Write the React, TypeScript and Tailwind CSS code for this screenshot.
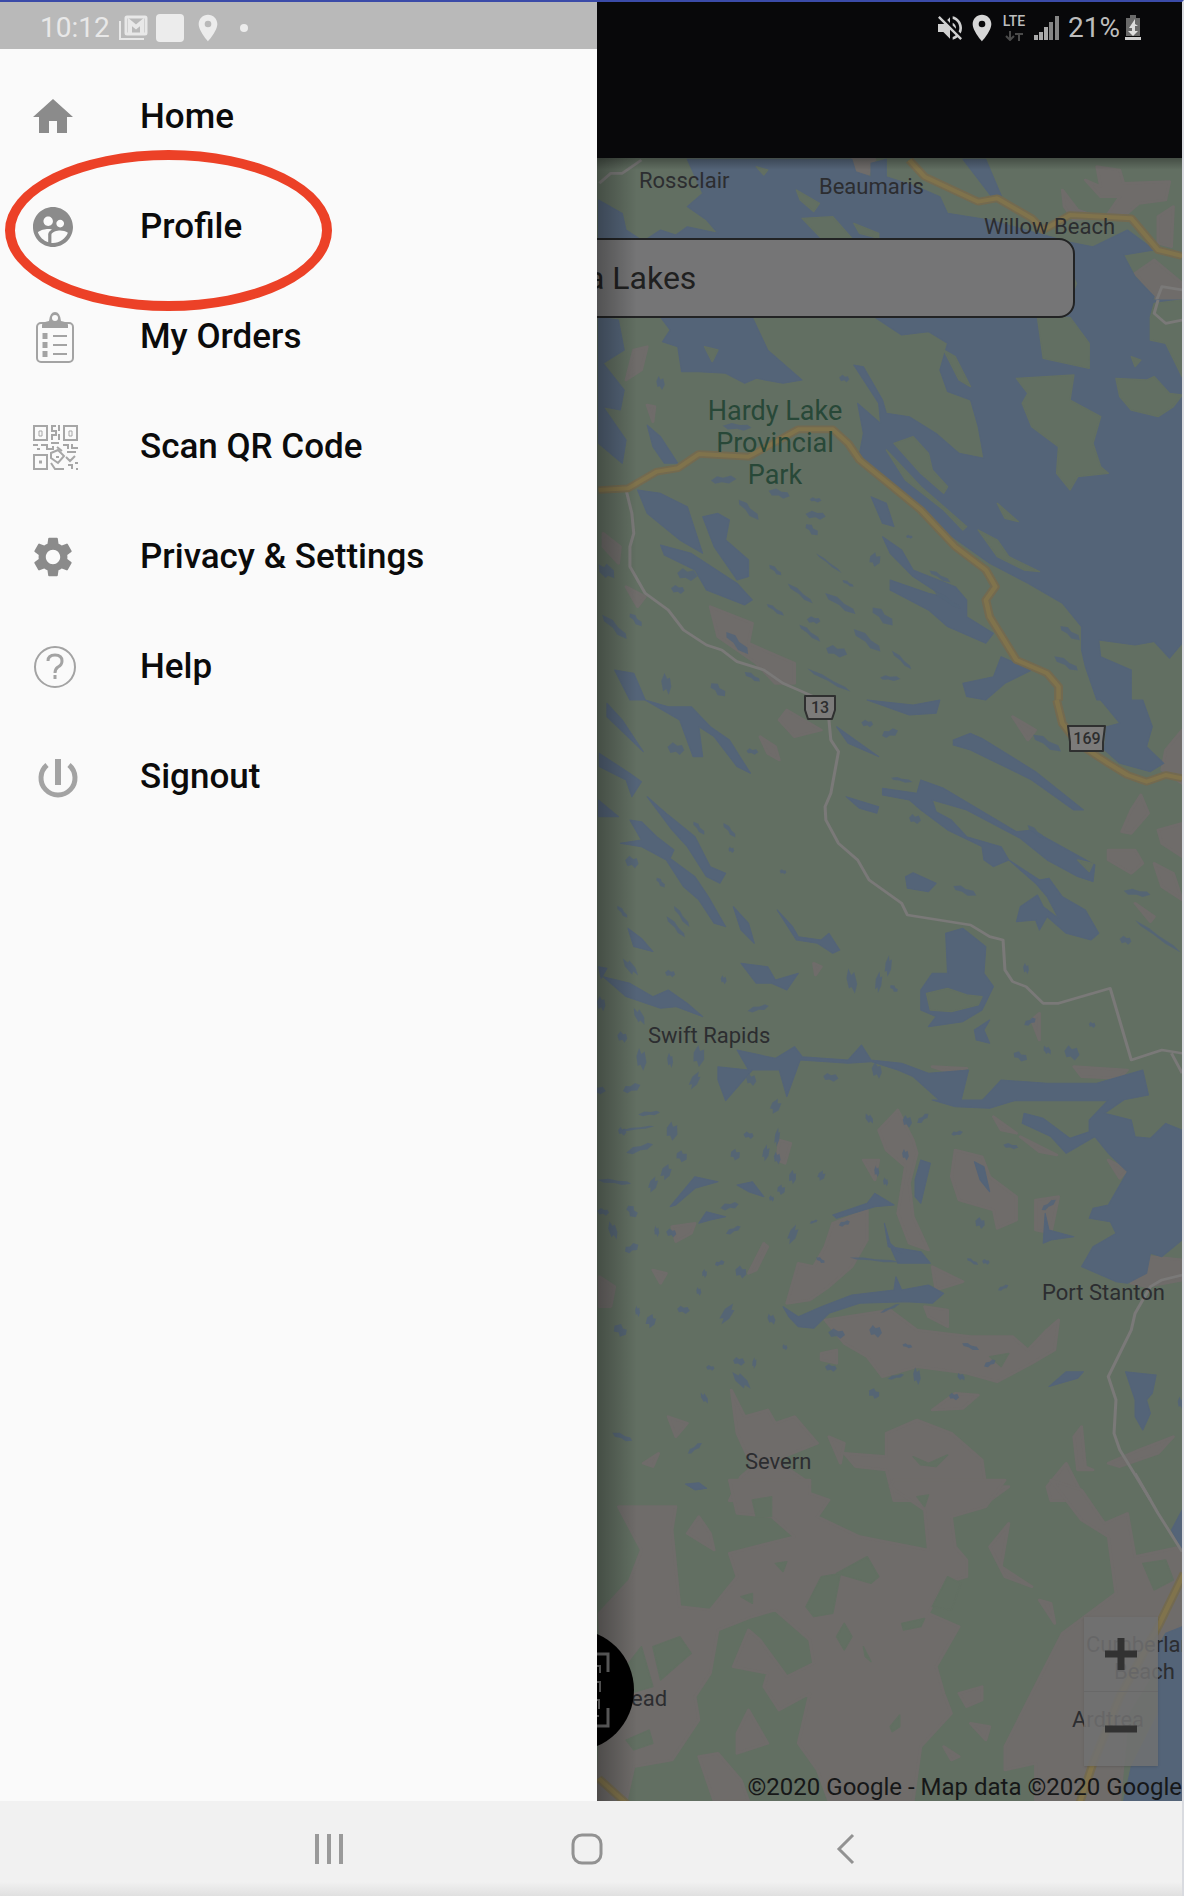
import type { ReactNode } from "react";
import { MdHome, MdSupervisedUserCircle, MdSettings, MdLocationOn, MdVolumeOff } from "react-icons/md";

const WATER = "#546478";
const WOODS = "#626f62";
const LAND = "#6f6c6a";

type Tile = {
  y: number;
  land: string[];
  water: string[];
  woods: string[];
  ponds: number[][];
  highway: string[];
  road: string[];
};

const tiles: Tile[] = [
  {
    y: 0,
    land: [
      "M1310 540L1350 560L1340 500L1400 510L1410 550L1530 545L1520 600L1450 610L1410 650L1370 640L1400 590L1350 590Z",
      "M1250 570L1290 630L1340 650L1280 660L1255 620Z",
      "M1500 650L1540 620L1535 740L1500 730Z",
      "M700 478L760 478L740 530L700 520Z",
      "M1440 820L1490 780L1563 850L1563 960L1500 900Z",
    ],
    water: [
      "M38 600L100 640L110 690L150 720L38 720Z",
      "M270 478L700 478L710 515L750 530L750 490L790 478L790 530L870 560L930 590L950 640L1060 660L1250 720L160 720L200 690L240 705L270 680L350 700L320 660L270 620L310 580Z",
      "M990 478L1050 478L1095 600L1075 605Z",
      "M1240 720L1330 740L1420 690L1490 750L1410 765L1440 830L1490 890L1440 1020L1310 1020L1260 950L1290 850Z",
    ],
    woods: [
      "M555 570L615 610L600 635L565 600Z",
      "M570 655L650 650L700 715L620 715Z",
      "M705 670L770 700L770 715L720 700Z",
      "M450 500L480 510L470 525Z",
    ],
    ponds: [],
    highway: ["M850 480L890 530L1030 605L1080 595L1170 655L1200 690L1270 645L1430 655L1500 750L1563 768"],
    road: ["M40 550L70 520L100 520L150 480", "M1563 870L1510 860L1490 920L1530 970L1563 960"],
  },
  {
    y: 300,
    land: [
      "M110 240L130 150L165 140L150 210Z",
      "M330 920L440 970L430 1030L550 1090L550 1150L500 1150L450 1090L350 1010Z",
      "M50 700L95 740L90 790L50 740Z",
      "M110 860L160 890L140 920Z",
      "M165 315L185 320L180 365Z",
    ],
    water: [
      "M38 52L90 60L105 150L50 190L105 270L95 330L50 320L110 420L100 490L38 430Z",
      "M200 52L440 52L480 150L570 240L520 250L450 235L420 250L370 220L300 215L255 215L245 140L205 125L225 90Z",
      "M760 52L830 105L900 95L950 130L930 210L950 275L1010 300L1030 380L1045 475L980 460L920 400L850 350L790 340L780 300L730 200L705 195L770 310L775 370L715 310L730 400L720 460L770 530L950 700L1060 790L1160 850L1250 910L1300 980L1300 1050L1310 1100L1340 1200L1430 1200L1430 1110L1350 1070L1345 1020L1440 1035L1490 1025L1530 1075L1563 1030L1563 0L1280 0L1250 50Z",
      "M140 570L200 580L270 620L310 760L250 720L165 640Z",
      "M310 650L350 640L380 660L370 720L430 780L430 830L400 840L340 740Z",
      "M200 735L280 760L400 850L440 900L420 915L320 870L290 810L210 765Z",
      "M165 375L200 410L245 490L210 490L180 440Z",
      "M780 710L830 750L860 810L970 860L1000 900L1000 950L1070 1000L1050 1030L950 980L900 930L800 870L800 840L900 880L940 890L860 830L800 760Z",
      "M750 590L790 610L810 680L780 670Z",
      "M990 1150L1070 1130L1090 1070L1170 1110L1100 1150L1050 1200L1000 1190Z",
      "M80 1110L130 1120L160 1200L120 1200Z",
    ],
    woods: [
      "M1185 52L1270 52L1320 130L1320 205L1200 175Z",
      "M1130 235L1280 225L1270 300L1350 350L1330 430L1350 500L1370 520L1290 530L1270 570L1235 520L1240 440L1170 380L1145 310L1160 280Z",
      "M1390 235L1470 240L1490 230L1530 280L1563 285L1540 320L1500 350L1430 330L1400 290Z",
      "M1480 52L1490 10L1563 0L1563 230L1520 130L1480 120Z",
      "M810 430L860 410L900 460L910 510L950 560L940 580L880 520Z",
      "M790 450L880 560L1000 680L990 690L940 630L840 540Z",
      "M1030 690L1080 720L1110 770L1190 815L1150 810L1080 770Z",
      "M1080 610L1135 665L1100 655Z",
      "M940 150L970 170L1010 260L980 240Z",
      "M315 140L350 150L335 185Z",
      "M1430 170L1455 180L1440 200Z",
    ],
    ponds: [
      [365, 540, 30, 14, -10], [510, 580, 26, 14, 10], [430, 630, 36, 12, 45], [605, 645, 24, 14, 0], [595, 690, 20, 12, 40],
      [680, 235, 12, 12, 0], [200, 250, 10, 22, 0], [400, 380, 34, 12, 0], [270, 825, 24, 20, 0], [245, 868, 16, 14, 0],
      [60, 815, 16, 30, -30], [80, 980, 44, 12, 45], [135, 960, 22, 10, 45], [565, 880, 40, 8, 40], [500, 930, 26, 7, 35],
      [670, 910, 46, 12, 35], [780, 950, 34, 16, 40], [600, 960, 16, 12, 0], [590, 1000, 34, 8, 40], [740, 1020, 44, 14, 40],
      [660, 1055, 26, 18, 10], [830, 1080, 34, 7, 45], [800, 1135, 24, 9, 0], [640, 1140, 60, 7, 30], [400, 1030, 40, 14, 45],
      [215, 1150, 12, 34, 0], [350, 1170, 24, 14, 40], [440, 1130, 22, 9, 30], [760, 780, 14, 22, 20], [690, 850, 16, 6, 30],
      [640, 790, 40, 4, 40], [500, 810, 20, 8, 40], [930, 830, 30, 8, 30], [950, 900, 40, 8, 35], [1270, 1000, 30, 12, 35],
      [1260, 1090, 34, 12, 30], [605, 600, 14, 8, 0], [850, 710, 8, 6, 0],
    ],
    highway: [
      "M38 570L115 565L190 515L245 505L300 462L430 470L510 420L560 388L650 388L690 430L720 480L880 630L970 740L1050 810L1075 860L1050 900L1060 950L1130 1080L1210 1120L1240 1160L1240 1202",
    ],
    road: ["M110 570L125 640L130 700L120 740L120 800L160 880L220 930L260 990L320 1035L360 1050L400 1085L470 1110L520 1150L600 1190", "M1563 60L1520 70L1490 40L1500 0"],
  },
  {
    y: 700,
    land: [
      "M510 60L530 30L620 90L550 110Z", "M460 110L500 140L510 180L480 160Z", "M1430 330L1455 285L1475 340L1430 400L1405 395Z",
      "M1370 450L1440 450L1460 490L1430 520L1370 480Z", "M1500 390L1563 370L1563 470L1510 430Z", "M1490 490L1540 520L1563 600L1510 560Z",
      "M1520 150L1563 90L1563 250L1510 210Z", "M1120 50L1180 90L1160 120Z", "M1170 960L1190 940L1190 1020Z",
      "M600 790L620 800L605 825Z", "M1280 1100L1420 1110L1400 1135L1300 1130Z", "M910 1100L1000 1105L950 1115Z", "M1440 610L1490 650L1480 665Z",
    ],
    water: [
      "M1010 100L1040 115L1180 215L1305 330L1280 330L1170 240L1010 150L965 135L965 120Z",
      "M780 265L870 280L880 240L940 265L1130 395L1170 390L1335 495L1330 545L1290 530L1210 480L1140 415L1000 330L910 300L920 335L960 360L1000 410L1090 440L1110 480L1070 500L1045 480L1040 440L950 390L880 330L850 300L780 285Z",
      "M1110 480L1190 540L1215 535L1250 590L1310 630L1345 700L1325 720L1260 700L1210 650L1190 690L1180 660L1130 665L1140 620L1185 585L1200 620L1240 655L1210 590L1180 550Z",
      "M840 530L860 518L920 550L900 575L845 565Z",
      "M945 700L990 685L1050 740L1045 820L1070 860L1040 930L990 965L900 980L920 950L880 930L880 870L910 820L950 820Z",
      "M1350 0L1460 0L1485 80L1470 140L1515 190L1480 215L1400 190L1360 150L1365 80L1400 70Z",
      "M165 290L220 345L290 410L330 500L370 520L355 550L320 530L270 440L230 390Z",
      "M95 430L150 420L120 360L150 365L190 410L235 450L225 475L290 530L325 590L370 680L340 670L300 600L260 560L215 480L150 440Z",
      "M60 10L100 60L155 155L60 50Z",
      "M160 0L220 20L280 20L330 80L380 120L435 220L400 200L340 110L300 80L310 170L285 170L250 60Z",
      "M40 160L120 220L150 245L125 290L110 240L40 200Z",
      "M38 300L90 350L38 350Z",
      "M505 630L545 680L560 710L620 720L640 700L668 750L650 760L610 730L555 720Z",
      "M410 790L480 800L500 840L560 820L530 870L490 850L450 850Z",
      "M50 830L120 850L180 890L220 870L270 910L310 950L240 920L200 925L110 890Z",
      "M390 620L430 670L445 730L410 690Z",
      "M115 685L150 715L180 755L130 740Z",
      "M660 80L770 170L690 130Z",
      "M685 290L770 320L765 340L720 325Z",
      "M740 0L860 15L930 0L920 40L850 45Z",
      "M350 1100L430 1110L400 1050L500 1075L550 1040L570 1070L690 1080L725 1035L750 1080L830 1090L900 1120L1005 1110L985 1202L930 1202L860 1130L820 1110L750 1085L690 1090L565 1080L530 1190L510 1110L440 1110L370 1202L350 1140Z",
      "M1090 1140L1210 1150L1340 1150L1460 1110L1475 1185L1400 1202L1040 1202Z",
      "M38 800L60 805L45 835Z",
      "M1020 990L1060 960L1045 990L1060 1030L1025 1020Z",
    ],
    woods: [
      "M895 880L950 865L1000 885L1040 890L1030 915L960 935L905 930Z",
      "M1290 480L1330 490L1320 515Z",
    ],
    ponds: [
      [995, 573, 30, 12, 20], [240, 145, 20, 20, 0], [865, 358, 14, 16, 0], [380, 390, 24, 8, 50], [300, 385, 22, 8, 50], [125, 485, 16, 20, 0],
      [200, 548, 16, 8, 50], [240, 680, 36, 8, 50], [255, 650, 34, 7, 55], [100, 635, 20, 7, 50], [700, 845, 12, 40, -5], [770, 845, 8, 34, 10],
      [795, 800, 8, 34, 10], [225, 820, 12, 12, 0], [365, 840, 7, 14, 0], [455, 925, 26, 10, -20], [145, 950, 10, 30, -20], [100, 1010, 12, 18, 0],
      [150, 1080, 12, 36, 0], [225, 1080, 7, 24, 0], [300, 1070, 14, 34, 10], [290, 1140, 10, 30, 30], [125, 1165, 22, 14, -30], [45, 910, 10, 24, 0],
      [1275, 1060, 18, 24, 0], [1165, 965, 16, 10, -40], [1140, 1070, 18, 14, 20], [1210, 1050, 8, 16, -20], [645, 1133, 18, 14, 0],
      [1445, 578, 32, 12, 5], [1500, 710, 70, 6, 38], [1415, 720, 14, 14, 0], [1210, 130, 40, 14, 30], [1155, 805, 7, 18, 0], [800, 100, 20, 14, -30],
      [740, 70, 14, 12, 0], [830, 240, 26, 7, 10], [1180, 395, 26, 8, 40], [440, 155, 14, 10, 0], [520, 515, 8, 8, 0], [385, 450, 7, 10, 0],
      [810, 865, 12, 8, 40], [1328, 975, 8, 10, 0], [765, 1110, 12, 26, 0], [437, 1140, 12, 20, 0], [120, 800, 10, 34, -30], [35, 1170, 20, 14, 0],
    ],
    highway: ["M1235 0L1250 70L1290 130L1370 190L1420 225L1470 245L1520 225L1563 235"],
    road: [
      "M640 60L645 120L665 155L645 280L630 320L632 360L665 430L715 480L745 540L830 610L845 645L1010 675L1060 710L1095 720L1100 810L1120 845L1155 860L1200 910L1240 910L1375 865L1430 1080L1510 1050L1563 1060",
      "M1535 1060L1563 1120",
    ],
  },
  {
    y: 1100,
    land: [
      "M770 90L820 30L860 120L870 160L850 250L860 350L900 450L850 430L820 340L840 200L790 150Z",
      "M970 150L1040 170L1060 230L1130 290L1130 360L1080 385L1070 330L980 300L960 230Z",
      "M650 370L740 330L740 420L700 500L640 560L590 600L530 610L560 490L600 500L630 440Z",
      "M630 660L800 630L870 690L1010 710L1120 710L1160 750L1210 690L1240 660L1230 750L1170 790L1080 845L1000 820L870 800L780 830L740 770L680 730Z",
      "M385 870L420 950L480 930L500 970L550 950L610 1030L500 1080L590 1150L580 1202L380 1202L410 1130L440 1100L400 1000Z",
      "M680 1060L790 1070L790 1000L870 960L960 1000L1040 1080L1050 1160L1110 1160L1060 1202L810 1202L790 1110L710 1100Z",
      "M1210 1160L1260 1090L1310 1202L1220 1202Z",
      "M220 950L270 970L240 1010Z", "M230 380L290 370L280 400L240 425Z", "M430 520L470 430L480 440L450 510Z",
      "M180 510L215 520L200 550Z", "M155 1090L195 1060L180 1100Z", "M1370 180L1420 210L1400 235Z", "M1070 50L1130 100L1090 90Z",
      "M1140 110L1235 165L1190 155Z", "M1180 300L1240 290L1220 400L1180 390Z", "M1280 1010L1300 980L1310 1100L1330 1110L1290 1110Z",
      "M1370 1090L1450 1050L1540 1010L1500 1060L1400 1100Z", "M910 930L970 880L1030 885L990 925Z", "M730 180L770 180L760 240Z",
      "M510 120L540 130L525 190L505 180Z", "M1480 470L1563 480L1563 540L1470 560L1430 550L1430 520Z", "M620 760L660 750L660 790L620 780Z",
      "M890 620L950 630L950 680L900 650Z", "M40 530L80 560L70 620L40 620Z", "M640 1010L680 1030L670 1090Z", "M910 500L990 545L920 570Z",
    ],
    water: [
      "M1370 0L1410 0L1360 40L1430 60L1440 110L1480 115L1520 70L1563 90L1563 420L1510 470L1480 460L1470 520L1420 550L1390 545L1300 500L1330 440L1390 400L1375 365L1320 355L1330 325L1370 315L1420 215L1370 160L1335 110L1260 160L1220 110L1145 70L1150 40L1200 55L1270 115L1320 95L1320 60Z",
      "M520 620L560 650L620 620L700 585L810 570L815 530L830 570L900 555L940 580L910 610L840 605L720 610L640 640L600 685L560 680L535 650Z",
      "M1415 815L1495 825L1485 880L1470 900L1480 940L1460 990L1440 950L1440 900Z",
      "M910 0L1130 0L1060 25L970 20Z",
      "M880 180L905 190L880 310L865 290L865 240Z", "M1020 185L1045 200L1060 275L1035 240Z", "M225 320L290 230L350 245L290 265L240 315Z",
      "M650 345L740 310L760 280L810 315L760 320L660 355Z", "M1215 860L1260 815L1305 815L1290 835Z", "M800 440L880 455L905 490L820 490Z",
      "M785 370L800 430L830 460L795 440Z", "M400 255L440 245L470 290L430 275Z", "M300 370L320 335L370 350L330 360Z",
      "M1200 430L1205 340L1215 390L1280 410L1220 420Z", "M270 1155L320 1165L290 1170Z",
    ],
    woods: ["M860 1070L900 1090L950 1065L920 1100L880 1095Z", "M1060 770L1110 760L1090 800Z"],
    ponds: [
      [500, 20, 12, 24, 30], [170, 40, 26, 8, -10], [100, 95, 10, 14, 0], [140, 85, 40, 5, -10], [230, 95, 14, 30, 10], [145, 145, 34, 12, -25],
      [255, 170, 14, 18, 20], [215, 215, 12, 26, 25], [180, 255, 10, 26, 25], [80, 245, 40, 8, 5], [395, 165, 12, 18, 20], [430, 105, 12, 12, 0],
      [475, 160, 8, 26, 15], [505, 110, 6, 30, 10], [505, 175, 8, 20, 0], [545, 230, 9, 22, 10], [515, 270, 10, 16, 20], [490, 295, 6, 10, 0],
      [620, 228, 9, 16, 30], [380, 318, 22, 12, -20], [125, 335, 18, 14, 50], [75, 390, 10, 30, -10], [125, 445, 18, 14, -40], [228, 398, 12, 14, 0],
      [190, 395, 6, 18, 0], [390, 390, 20, 9, -35], [545, 405, 10, 32, 25], [410, 515, 14, 20, 10], [355, 490, 12, 9, -30], [315, 520, 6, 14, 10],
      [300, 575, 6, 14, 0], [375, 640, 12, 36, 35], [260, 630, 15, 13, 0], [175, 662, 12, 22, 25], [140, 635, 6, 18, 0], [95, 690, 18, 18, 30],
      [490, 658, 9, 18, -10], [745, 55, 8, 18, -20], [845, 65, 11, 20, 0], [885, 55, 18, 9, -50], [840, 165, 8, 18, 0], [1115, 138, 18, 9, 5],
      [765, 215, 6, 18, 0], [788, 245, 6, 14, 0], [975, 100, 14, 8, -20], [1035, 368, 12, 18, 10], [1215, 315, 22, 9, -45], [618, 480, 12, 7, 30],
      [760, 480, 60, 5, 5], [660, 700, 20, 16, 0], [762, 695, 15, 20, 0], [645, 803, 14, 12, 0], [1010, 740, 22, 8, 20], [1060, 790, 16, 9, -40],
      [845, 738, 12, 7, 10], [815, 830, 20, 7, -20], [870, 830, 9, 28, 0], [758, 880, 14, 16, 20], [967, 890, 12, 12, 0], [1095, 563, 14, 7, -35],
      [1015, 485, 16, 6, 30], [1050, 485, 9, 9, 0], [405, 785, 14, 14, 0], [410, 840, 12, 36, -35], [315, 895, 7, 20, -20], [100, 1010, 26, 10, 20],
      [290, 1045, 22, 8, -45], [330, 803, 10, 9, 0], [525, 742, 6, 10, 0], [985, 830, 8, 14, -20], [800, 625, 26, 5, -30], [680, 370, 14, 9, -30],
      [1560, 910, 8, 20, 0], [50, 335, 14, 12, 0], [445, 790, 5, 18, 10], [600, 365, 10, 5, -30],
    ],
    highway: [],
    road: ["M1563 525L1510 540L1480 560L1440 640L1430 690L1370 830L1390 900L1385 1000L1400 1050L1480 1200"],
  },
  {
    y: 1480,
    land: [
      "M380 0L590 0L590 40L640 60L610 110L720 170L900 210L890 90L800 20L810 0L1100 0L1050 80L960 110L970 200L1000 240L1000 290L940 310L900 400L980 440L920 560L940 640L960 700L880 800L860 963L640 963L610 870L560 790L590 640L510 690L470 620L480 580L390 560L430 450L460 480L530 590L600 550L590 480L500 390L440 410L350 450L330 580L290 650L300 720L230 840L130 860L110 963L38 963L38 880L50 600L40 400L120 300L150 210L90 80L240 80L230 150L250 380L330 390L400 290L380 220L550 170L490 110L400 100Z",
      "M1220 0L1300 30L1360 130L1420 100L1440 230L1563 200L1563 430L1420 700L1400 963L1180 963L1180 850L1100 870L1100 800L1170 640L1250 460L1390 340L1370 170L1300 120Z",
      "M300 830L350 820L410 900L430 963L340 963Z",
      "M1060 200L1110 130L1090 260L1170 320L1100 290Z", "M270 160L300 110L330 160L340 210Z", "M1190 360L1220 370L1230 430Z",
      "M980 640L1040 620L1040 660L1000 680Z", "M1010 730L1060 740L1050 780Z", "M940 800L980 830L960 840Z", "M400 760L430 690L480 790L400 820Z",
    ],
    water: [
      "M1563 440L1520 460L1500 500L1500 700L1430 860L1410 963L1563 963Z",
      "M1563 90L1535 150L1563 215Z",
      "M265 12L300 8L320 25L290 28Z",
    ],
    woods: [
      "M660 280L740 230L770 290L750 310Z", "M580 380L620 290L670 280L650 400L600 410Z", "M440 60L490 50L490 110L450 110Z",
      "M830 430L890 415L880 440L835 450Z", "M660 470L680 430L700 470L680 510Z", "M800 740L825 705L825 740L805 755Z",
      "M910 380L950 290L985 310L960 390Z", "M1460 250L1520 240L1540 300L1490 330Z", "M180 500L250 470L280 520L200 600Z",
      "M110 780L170 750L180 790L130 810Z", "M90 590L150 500L180 620L120 640Z", "M500 250L530 245L520 275Z", "M410 350L440 340L440 370Z",
      "M870 50L900 45L890 80Z", "M730 500L750 545L735 530Z",
    ],
    ponds: [],
    highway: ["M1568 280L1500 440L1400 650L1330 850L1295 970", "M38 895L115 975"],
    road: ["M1440 -20L1500 100L1563 215"],
  },
];

function MapDrawing() {
  return (
    <svg viewBox="597 158 585 1643" preserveAspectRatio="xMinYMin slice" className="absolute inset-0 h-full w-full" aria-hidden="true">
      <rect x="597" y="158" width="585" height="1643" fill={WOODS} />
      {tiles.map((t) => (
        <g key={t.y} transform={`translate(584 ${t.y}) scale(0.3827 0.3333)`} strokeLinejoin="round">
          <path d={t.land.join("")} fill={LAND} stroke={LAND} strokeWidth="8" />
          <path d={t.water.join("")} fill={WATER} stroke={WATER} strokeWidth="3" />
          <path d={t.woods.join("")} fill={WOODS} stroke={WOODS} strokeWidth="4" />
          {t.ponds.map(([x, y, rx, ry, a], i) => (
            <path
              key={i}
              d="M-1.1 -.2L-.4 -.9L.2 -.4L.8 -.5L1.1 .3L.5 1L0 .5L-.7 .7Z"
              fill={WATER}
              opacity="0.85"
              transform={`translate(${x} ${y}) rotate(${i % 2 ? a : a + 180}) scale(${rx} ${ry})`}
            />
          ))}
          <path d={t.road.join("")} fill="none" stroke="#7a7978" strokeWidth="8" />
          <path d={t.highway.join("")} fill="none" stroke="#736a50" strokeWidth="23" />
          <path d={t.highway.join("")} fill="none" stroke="#80734c" strokeWidth="12" />
        </g>
      ))}
      <g fill="#7c7b7a" stroke="#2f3030" strokeWidth="2" strokeLinejoin="round">
        <path d="M805 696h30v14l-3 9h-24l-3-9z" />
        <path d="M1068 726h37l-2 16v9h-33v-9z" />
      </g>
      <g fill="#2c2d2e" fontFamily="Roboto, sans-serif" fontWeight="500" fontSize="16" textAnchor="middle">
        <text x="820" y="713">13</text>
        <text x="1087" y="744">169</text>
      </g>
    </svg>
  );
}

function Place({ className, children }: { className: string; children: ReactNode }) {
  return <span className={`absolute whitespace-nowrap text-[22px] leading-7 text-[#2c2d30] ${className}`}>{children}</span>;
}

function ClipboardIcon() {
  return (
    <svg viewBox="0 0 50 52" className="h-[52px] w-[50px]" fill="none" stroke="#a3a3a3" aria-hidden="true">
      <rect x="8" y="12" width="36" height="39" rx="4" strokeWidth="2" />
      <path d="M13 17v-3q0-3 7-4q1-9 6-9t6 9q7 1 7 4v3z" fill="#a0a0a0" stroke="none" />
      <circle cx="26" cy="7" r="3" fill="#fafafa" stroke="none" />
      <path d="M16 22v6M16 31v6M16 40v6" strokeWidth="5" />
      <path d="M24 25h14M24 34h14M24 43h14" strokeWidth="2" />
    </svg>
  );
}

function QrIcon() {
  return (
    <svg viewBox="0 0 50 52" className="h-[52px] w-[50px]" fill="none" stroke="#a6a6a6" strokeWidth="2" aria-hidden="true">
      <path d="M5 5h13v14h-13zM35 5h13v14h-13zM5 34h13v14h-13z" />
      <path d="M10 10h3v5h-3zM40 10h3v5h-3z" strokeWidth="1" />
      <path d="M10 41h3" strokeWidth="3" />
      <path d="M27 5h-4v5h4v4h-4v5M30 4v6M30 13v6M22 22h8M4 24h5M8 28h3M12 24h6v4h6v-3M28 26l5 4M34 24h5v4M43 23v4h6M38 31h9" />
      <path d="M22 32l7-3l6 6l-6 7l-7-5zM22 42l4 6h9M37 36l4 4l5-5M39 44h4v4M46 42h3M47 48h2M27 36h3" />
    </svg>
  );
}

function HelpIcon() {
  return (
    <svg viewBox="0 0 50 52" className="h-[52px] w-[50px]" fill="none" stroke="#a3a3a3" strokeWidth="2" aria-hidden="true">
      <circle cx="26" cy="26" r="20" />
      <path d="M19 20q0-6 7-6t7 6q0 4-4 6q-3 2-3 6" strokeWidth="3" />
      <path d="M26 34v4" strokeWidth="3" />
    </svg>
  );
}

function PowerIcon() {
  return (
    <svg viewBox="0 0 50 52" className="h-[52px] w-[50px]" fill="none" stroke="#a3a3a3" strokeWidth="5" aria-hidden="true">
      <path d="M29 8v26" strokeWidth="6" />
      <path d="M18 14a17 17 0 1 0 22 0" />
    </svg>
  );
}

const menu: { label: string; icon: ReactNode; marked?: boolean }[] = [
  { label: "Home", icon: <MdHome className="size-12 text-[#8b8b8b]" /> },
  { label: "Profile", icon: <MdSupervisedUserCircle className="size-12 text-[#8b8b8b]" />, marked: true },
  { label: "My Orders", icon: <ClipboardIcon /> },
  { label: "Scan QR Code", icon: <QrIcon /> },
  { label: "Privacy & Settings", icon: <MdSettings className="size-12 text-[#8b8b8b]" /> },
  { label: "Help", icon: <HelpIcon /> },
  { label: "Signout", icon: <PowerIcon /> },
];

function Drawer() {
  return (
    <aside className="flex flex-col bg-[#fafafa]">
      <div className="flex h-[47px] items-center bg-[#b9b9b9] pl-10 pt-1 text-[28px] text-[#e8e8e8]">
        <time>10:12</time>
        <svg viewBox="0 0 30 26" className="ml-2 h-[26px] w-[30px]" fill="none" stroke="#e8e8e8" strokeWidth="3" aria-hidden="true">
          <path d="M2 6v18h24" strokeWidth="2" />
          <rect x="8" y="2" width="20" height="17" rx="1" />
          <path d="M12 18v-11l6 5l6-5v11" strokeWidth="4" />
        </svg>
        <span className="ml-2 h-7 w-7 rounded-sm bg-[#ececec]" />
        <MdLocationOn className="ml-2 size-8 text-[#ececec]" />
        <span className="ml-4 size-2 rounded-full bg-[#ececec]" />
      </div>
      <nav className="flex flex-col pt-[13px]">
        {menu.map((m) => (
          <a key={m.label} href="#" className="relative flex h-[110px] items-center pl-[29px] text-[35px] font-medium text-[#0b0b0b]">
            <span className="flex w-[111px] items-center">{m.icon}</span>
            {m.label}
            {m.marked && <span className="absolute left-[5px] top-[-22px] h-[161px] w-[327px] rounded-[50%] border-10 border-[#ec4127]" />}
          </a>
        ))}
      </nav>
    </aside>
  );
}

function MapScreen() {
  return (
    <section className="flex flex-col overflow-hidden bg-[#08080a]">
      <div className="flex h-[47px] items-center justify-end pr-10 pt-1 text-[28px] text-[#bdbdbd]">
        <MdVolumeOff className="size-8 text-[#d0d0d0]" />
        <MdLocationOn className="size-8 text-[#d6d6d6]" />
        <span className="flex w-8 flex-col items-center text-[14px] font-medium leading-3 text-[#bdbdbd]">
          LTE
          <svg viewBox="0 0 18 10" className="mt-1 h-[10px] w-[18px]" fill="none" stroke="#4a4a4a" strokeWidth="2" aria-hidden="true">
            <path d="M5 0v8M1 5l4 4l4-4M14 10v-8M10 3h8" />
          </svg>
        </span>
        <svg viewBox="0 0 26 24" className="ml-1 h-6 w-[26px]" strokeWidth="4" aria-hidden="true">
          <path d="M2 24v-5M7 24v-8M12 24v-13" stroke="#aaa" />
          <path d="M17 24v-18M23 24v-24" stroke="#858585" />
        </svg>
        <span className="ml-2">21%</span>
        <svg viewBox="0 0 18 26" className="ml-1 h-[26px] w-[18px]" aria-hidden="true">
          <path d="M6 0h6v3h4v18h-14v-18h4z" fill="#6a6a6a" />
          <path d="M11 4l-6 9h3v3h-4l5 5l5-5h-3v-5h3l-3-2z" fill="#dedede" />
          <path d="M1 22h16v3h-16z" fill="#cfcfcf" />
        </svg>
      </div>
      <div className="h-[109px]" />
      <div className="relative flex-1 overflow-hidden">
        <MapDrawing />
        <Place className="left-[42px] top-[9px]">Rossclair</Place>
        <Place className="left-[222px] top-[15px]">Beaumaris</Place>
        <Place className="left-[387px] top-[55px]">Willow Beach</Place>
        <p className="absolute left-[98px] top-[237px] w-40 text-center text-[27px] leading-8 text-[#284838]">Hardy Lake Provincial Park</p>
        <Place className="left-[51px] top-[864px]">Swift Rapids</Place>
        <Place className="left-[445px] top-[1121px]">Port Stanton</Place>
        <Place className="left-[148px] top-[1290px]">Severn</Place>
        <Place className="left-[34px] top-[1527px]">ead</Place>
        <Place className="left-[489px] top-[1473px]">Cumberland</Place>
        <Place className="left-[517px] top-[1500px]">Beach</Place>
        <Place className="left-[475px] top-[1548px]">Ardtrea</Place>
        <input
          aria-label="Search location"
          defaultValue="a Lakes"
          className="absolute -left-3 right-[107px] top-20 h-20 rounded-r-2xl border-2 border-[#222324] bg-[#757576] text-[32px] text-[#1f2020] outline-none"
        />
        <button aria-label="Scan code" className="absolute -left-[85px] bottom-[50px] flex size-[122px] items-center justify-end rounded-full bg-black pr-6">
          <svg viewBox="0 0 14 76" className="h-[76px] w-[14px]" fill="none" stroke="#6d6d6d" strokeWidth="3" aria-hidden="true">
            <path d="M0 2h12v18M0 74h12v-18" />
            <path d="M0 14h4v7M0 30h4v10M1 48h2v9M0 64h3" strokeWidth="2" />
          </svg>
        </button>
        <div className="absolute bottom-[35px] right-6 flex w-[74px] flex-col bg-[#717171]/85 shadow">
          <button aria-label="Zoom in" className="flex h-[75px] items-center justify-center border-b border-[#686868]">
            <svg viewBox="0 0 32 32" className="size-8" stroke="#323232" strokeWidth="7" aria-hidden="true">
              <path d="M0 16h32M16 0v32" />
            </svg>
          </button>
          <button aria-label="Zoom out" className="flex h-[74px] items-center justify-center">
            <svg viewBox="0 0 32 32" className="size-8" stroke="#323232" strokeWidth="7" aria-hidden="true">
              <path d="M0 16h32" />
            </svg>
          </button>
        </div>
        <p className="absolute bottom-0 right-0 whitespace-nowrap text-[24px] leading-7 text-[#161718]">©2020 Google - Map data ©2020 Google</p>
        <div className="pointer-events-none absolute inset-y-0 left-0 w-10 bg-linear-to-r from-black/30 to-transparent" />
        <div className="pointer-events-none absolute inset-x-0 top-0 h-3 bg-linear-to-b from-black/30 to-transparent" />
      </div>
    </section>
  );
}

export default function App() {
  return (
    <div className="flex min-h-screen flex-col border-t-2 border-r-2 border-t-[#3b4ba8] border-r-[#d9dbe0] bg-[#f1f1f1] font-[Roboto,sans-serif]">
      <main className="grid flex-1 grid-cols-[597fr_585fr]">
        <Drawer />
        <MapScreen />
      </main>
      <footer className="flex h-[95px] items-center justify-center bg-linear-to-b from-[#f1f1f1] from-85% to-[#e0e0e0] pr-2">
        <div className="grid w-[66%] grid-cols-3 justify-items-center">
          <button aria-label="Recent apps">
            <svg viewBox="0 0 32 32" className="size-8" stroke="#9a9a9a" strokeWidth="4" aria-hidden="true">
              <path d="M4 1v30M16 1v30M28 1v30" />
            </svg>
          </button>
          <button aria-label="Home screen">
            <svg viewBox="0 0 32 32" className="size-8" fill="none" stroke="#929292" strokeWidth="3" aria-hidden="true">
              <rect x="2" y="2" width="28" height="28" rx="9" />
            </svg>
          </button>
          <button aria-label="Back">
            <svg viewBox="0 0 32 32" className="size-8" fill="none" stroke="#929292" strokeWidth="3" aria-hidden="true">
              <path d="M24 2l-14 14l14 14" />
            </svg>
          </button>
        </div>
      </footer>
    </div>
  );
}
